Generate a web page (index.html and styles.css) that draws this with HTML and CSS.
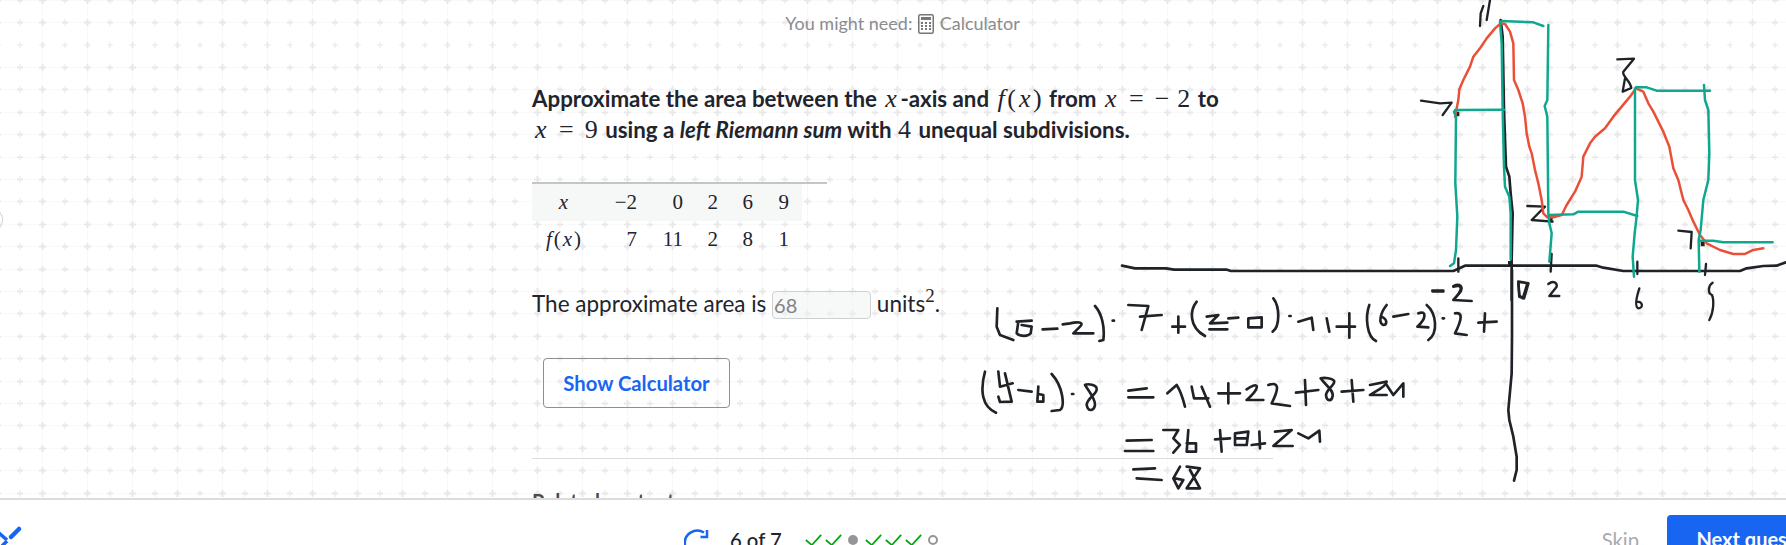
FILE: index.html
```html
<!DOCTYPE html>
<html lang="en">
<head>
<meta charset="utf-8">
<title>Left Riemann sum</title>
<link rel="stylesheet" href="styles.css">
</head>
<body>
<div class="page">
  <main class="main">
    <span class="edge-circle"></span>
    <div class="column">
      <p class="hint">You might need:
        <svg class="calc" viewBox="0 0 16 20" width="16" height="20">
          <rect x="0.75" y="0.75" width="14.5" height="18.5" rx="1.5" fill="none" stroke="#777" stroke-width="1.5"/>
          <rect x="3" y="3" width="10" height="3" fill="#777"/>
          <path d="M3 8h2v2H3zM7 8h2v2H7zM11 8h2v2h-2zM3 11h2v2H3zM7 11h2v2H7zM11 11h2v2h-2zM3 14h2v2H3zM7 14h2v2H7zM11 14h2v2h-2z" fill="#777"/>
        </svg>
        Calculator</p>
      <p class="question">Approximate the area between the <span class="m"><i>x</i></span>-axis and <span class="m"><i>f</i>(<i>x</i>)</span> from <span class="m"><i>x</i><b class="rel">=</b><span class="neg">−</span>2</span> to<br>
      <span class="m"><i>x</i><b class="rel">=</b>9</span> using a <em>left Riemann sum</em> with <span class="m">4</span> unequal subdivisions.</p>
      <div class="table-rule">
        <table class="values">
          <colgroup><col class="c1"><col class="c2"><col class="c3"><col class="c4"><col class="c4"><col class="c5"></colgroup>
          <tr class="head"><th><i>x</i></th><td>−2</td><td>0</td><td>2</td><td>6</td><td>9</td></tr>
          <tr><th><i>f</i>(<i>x</i>)</th><td>7</td><td>11</td><td>2</td><td>8</td><td>1</td></tr>
        </table>
      </div>
      <p class="answer">The approximate area is <input class="box" value="68" aria-label="answer"> units<sup class="m">2</sup>.</p>
      <button class="calc-btn" type="button">Show Calculator</button>
      <hr class="rule">
      <h2 class="related">Related content</h2>
    </div>
  </main>
  <footer class="footer">
    <div class="tool">
      <svg width="24" height="24" viewBox="0 0 24 24"><path d="M-1 9 L7 16 M7 17 L2 22" stroke="#1865f2" stroke-width="3.5" fill="none"/><path d="M11 13 L19 5" stroke="#1865f2" stroke-width="4.5" stroke-linecap="round" fill="none"/></svg>
    </div>
    <svg class="retry" width="26" height="26" viewBox="0 0 26 26"><path d="M1 18 A12.5 12.5 0 0 1 20 5.5" fill="none" stroke="#1865f2" stroke-width="2.5"/><path d="M23 3 V10 H16.5" fill="none" stroke="#1865f2" stroke-width="2.5"/></svg>
    <span class="count">6 of 7</span>
    <div class="dots">
      <svg class="tick" viewBox="0 0 20 14"><path d="M1 7 L8 13 L19 1"/></svg>
      <svg class="tick" viewBox="0 0 20 14"><path d="M1 7 L8 13 L19 1"/></svg>
      <span class="dot"></span>
      <svg class="tick" viewBox="0 0 20 14"><path d="M1 7 L8 13 L19 1"/></svg>
      <svg class="tick" viewBox="0 0 20 14"><path d="M1 7 L8 13 L19 1"/></svg>
      <svg class="tick" viewBox="0 0 20 14"><path d="M1 7 L8 13 L19 1"/></svg>
      <span class="ring"></span>
    </div>
    <div class="actions">
      <span class="skip">Skip</span>
      <button class="next" type="button">Next question</button>
    </div>
  </footer>
  <svg class="ink" width="1786" height="545" viewBox="0 0 1786 545">
    <g transform="translate(1430 0) scale(.33333)">
      <g class="pen">
        <path d="M-924,797 L-885,805 -792,805 -768,809 -609,809 -597,813 0,813 70,813 105,797 500,797 520,803 580,813 930,813 950,805 1000,798 1040,797 1068,787"/>
        <path d="M212,60 L218,110 222,330 228,500 238,530 242,580 248,640 245,780 245,900"/>
        <path class="thin" d="M150,78 L152,40 160,18 M170,60 L180,0"/>
        <path class="thin" d="M-27,302 L30,310 65,308 38,345"/>
        <path class="thin" d="M562,178 L612,176 580,215 C575,228 600,240 604,264 L578,275 585,235"/>
        <path class="thin" d="M292,618 L345,620 305,660 368,665"/>
        <path class="thin" d="M745,692 L785,696 782,745"/>
        <path class="thin" d="M85,775 L85,815 M365,762 L362,815 M622,785 L622,822 M828,792 L825,825"/>
        <path class="thin" d="M8,875 L40,875 M70,858 C90,848 100,860 92,875 L72,898 M265,850 L268,885 278,895 292,850 M355,852 C370,840 382,848 380,860 L358,888 388,888"/>
        <path class="thin" d="M628,865 C620,890 612,920 625,925 C640,925 640,905 620,905"/>
        <path class="thin" d="M848,848 C835,855 832,880 846,885 C852,900 852,935 838,960"/>
        <path class="thick" d="M76,342 h12 M234,790 h12 M356,660 h12 M812,732 h12"/>
      </g>
      <path class="red" d="M75,350 L85,300 88,268 100,240 120,200 130,170 150,145 170,115 195,85 212,70 225,72 240,95 250,130 252,240 265,270 278,310 285,350 290,400 298,440 305,460 315,510 325,550 335,600 340,640 352,652 370,652 395,645 410,615 435,575 455,530 460,470 480,430 495,410 525,385 550,350 575,320 600,290 618,265 640,275 655,310 670,335 700,395 718,440 730,505 745,540 760,600 775,630 790,665 810,705 830,730 870,750 910,762 945,762 970,750 1000,745"/>
      <path class="green" d="M60,798 L72,790 78,750 82,650 76,550 78,350 72,335 M75,330 L222,329 M210,65 L215,130 218,330 222,500 225,560 238,590 242,640 242,778 M215,63 L310,67 340,78 M355,75 L352,300 344,318 352,350 355,640 358,670 365,700 358,785 M355,645 L430,643 445,635 580,635 622,648 M618,262 L650,262 680,272 840,272 M615,265 L615,540 624,600 620,648 614,700 608,770 612,830 M822,255 L825,300 835,330 838,460 835,540 820,600 812,690 806,720 808,815 M810,722 L850,722 880,727 1028,727"/>
    </g>
    <g class="pen" transform="translate(970 290) scale(.33333)">
      <path d="M82,55 L80,110 90,135 130,150 M140,95 L185,92 M145,95 L140,130 C150,140 175,140 182,130 L185,110 155,105 M218,118 L262,116 M278,103 L300,100 C320,95 345,95 330,110 L310,130 370,130 M375,48 C395,70 405,110 400,150 L388,153"/>
      <path d="M428,92 h4 M475,45 L535,48 515,120 M510,80 L575,75 M607,110 L645,110 M625,80 L625,128 M680,35 C660,60 655,110 705,138 M710,80 L745,75 720,100 772,98 M718,118 L772,118 M775,85 L805,83 M835,85 L875,82 875,112 835,112 Z"/>
      <path d="M45,245 C30,300 35,350 78,368 M85,245 L90,290 128,280 M105,250 L125,335 L90,336 85,320 M145,300 L185,305 M205,290 L202,335 220,335 220,315 205,312 M245,252 C280,290 285,350 270,360 L245,363 M306,312 h4"/>
      <path d="M345,285 C355,300 378,330 375,345 C372,362 355,368 350,345 C350,325 385,310 380,295 C378,285 355,280 345,285 M475,302 L530,295 M475,322 L550,322 M592,310 L620,285 C630,300 640,330 645,350 M665,290 L672,325 715,325 M695,290 L720,350 M745,310 L810,310 M775,280 L775,340"/>
      <path d="M470,452 L545,450 M465,483 L550,483 M580,420 L625,420 610,445 630,465 610,488 M655,420 L650,485 678,485 678,460 650,460 M735,448 L780,445 M750,420 L755,485 M795,430 L835,425 830,465 795,465 Z M795,445 L832,445 M845,465 L885,460 M868,425 L870,475"/>
      <path d="M490,538 L555,535 M500,565 L575,570 M630,530 L610,565 625,595 640,570 615,565 M650,530 L690,535 650,595 690,595 660,540"/>
    </g>
    <g class="pen" transform="translate(1230 270) scale(.33333)">
      <path d="M846,0 L846,200 845,310 835,420 838,450 850,500 860,560 860,600 852,632"/>
      <path d="M865,35 L868,80 882,85 895,40 865,35"/>
      <path d="M130,85 C150,110 150,170 128,185 M178,138 h4 M205,155 L245,143 250,180 M290,145 L298,185 M320,170 L375,170 M358,130 L358,203 M418,105 C405,140 410,200 438,213 M470,105 C450,130 445,160 460,165 C470,165 475,150 455,140 M490,140 L535,132 M565,130 C590,120 590,145 562,170 L595,172 M590,105 C620,130 625,190 595,210 M638,145 h4 M675,130 C700,125 695,150 675,190 L710,195 M745,158 L800,155 M765,130 L762,185"/>
      <path d="M607,62 L640,62 M670,50 C700,40 700,60 670,90 L725,93"/>
      <path d="M50,358 C80,335 100,345 50,390 L100,390 M115,345 C145,335 150,350 125,400 L180,408 M198,368 L265,360 M225,330 L228,405 M272,325 C285,345 312,360 308,378 C305,395 290,395 288,375 C290,355 318,345 312,332 C305,325 285,322 272,325 M335,365 L400,360 M365,330 L370,395 M420,345 L470,335 C470,350 425,370 420,375 L470,375 M470,345 L490,375 520,340 520,380"/>
      <path d="M135,485 L185,480 130,528 188,528 M205,490 L235,505 268,482 270,515"/>
    </g>
  </svg>
</div>
</body>
</html>
```
FILE: styles.css
```css
* { box-sizing: border-box; }
html, body { margin: 0; padding: 0; height: 545px; overflow: hidden; background: #fff; }
body { font-family: Lato, "Open Sans", sans-serif; color: #21242c; }
.page { position: relative; width: 1786px; height: 545px; overflow: hidden; display: flex; flex-direction: column; }

.main {
  flex: 0 0 498px;
  position: relative;
  overflow: hidden;
  padding-left: 532px;
  background-color: #fff;
  background-image: url("data:image/svg+xml,%3Csvg xmlns='http://www.w3.org/2000/svg' width='45' height='45' viewBox='0 0 45 45'%3E%3Cpath d='M0 22.5H45M22.5 0V45' stroke='%23f3f3f3' stroke-width='2' stroke-dasharray='2 2'/%3E%3Cpath d='M15.5 22.5H29.5M22.5 15.5V29.5' stroke='%23e8e8e8' stroke-width='4'/%3E%3C/svg%3E");
  background-size: 22.5px 22.42px;
  background-position: 8.75px 11.4px;
}
.edge-circle { position: absolute; left: -24px; top: 207px; width: 27px; height: 26px; border: 1px solid #d4d4d4; border-radius: 50%; }
.column { width: 741px; }

.hint { margin: 0; padding-top: 11px; height: 35px; text-align: center; font-size: 18px; line-height: 24px; color: #8a8c90; }
.calc { vertical-align: -4px; margin: 0 1px; }

.m, .m i { font-family: "Liberation Serif", serif; font-weight: 400; }
.m { font-size: 26px; letter-spacing: 1px; margin: 0 1px; }
.m i { letter-spacing: 2.5px; padding-left: 2px; }
.rel { font-weight: 400; margin: 0 10px; }
.neg { margin-right: 7px; }

.question { margin: 48px 0 0; font-size: 22.3px; font-weight: 700; line-height: 31px; }
.question em { font-style: italic; }

.table-rule { width: 295px; margin-top: 37px; border-top: 2px solid #c4c5c7; }
.values { border-collapse: collapse; table-layout: fixed; width: 270px; font-family: "Liberation Serif", serif; font-size: 21px; }
.c1 { width: 65px; } .c2 { width: 53px; } .c3 { width: 46px; } .c4 { width: 35px; } .c5 { width: 36px; }
.values th { font-weight: 400; text-align: center; padding: 0; height: 37px; letter-spacing: 2px; }
.values td { text-align: right; padding: 0 13px 0 0; height: 37px; }
.head { background: #f6f7f7; }

.answer { margin: 31px 0 0; font-size: 22.5px; line-height: 30px; }
.answer sup { font-size: 19px; line-height: 0; letter-spacing: 0; margin: 0; vertical-align: 10px; }
.box { width: 99px; height: 28px; vertical-align: -1px; padding: 0 1px; border: 1px solid #cfd0d2; border-radius: 4px; background: rgba(240,241,242,.5); font: 20px Lato, sans-serif; color: #808285; }

.calc-btn { display: block; margin: 39px 0 0 11px; width: 187px; height: 50px; border: 1px solid #8e8f93; border-radius: 4px; background: transparent; color: #1865f2; font: 700 20.25px Lato, sans-serif; }
.rule { margin: 50px 0 0; border: 0; border-top: 1px solid #dcdcdd; }
.related { margin: 30px 0 0; font-size: 20.25px; font-weight: 700; color: #4a4c52; line-height: 24px; }

.footer { flex: 1; position: relative; display: flex; align-items: flex-start; background: #fff; border-top: 2px solid #dcdcdd; overflow: hidden; }
.tool { width: 684px; flex: none; padding-top: 24px; }
.tool svg { display: block; overflow: visible; }
.retry { flex: none; margin-top: 27px; }
.count { flex: none; margin: 26px 0 0 20px; font-size: 20.25px; font-weight: 500; line-height: 28px; }
.dots { flex: none; display: flex; align-items: center; gap: 3px; margin: 34px 0 0 23px; }
.tick { width: 17px; height: 12px; fill: none; stroke: #00a60e; stroke-width: 2; }
.dot { width: 10px; height: 10px; margin: 0 4px 0 3px; border-radius: 50%; background: #95969a; }
.ring { width: 10px; height: 10px; margin-left: 3px; border-radius: 50%; border: 2px solid #95969a; }
.actions { margin-left: auto; margin-right: -66px; display: flex; align-items: flex-start; flex: none; padding-top: 15px; }
.skip { margin: 12px 28px 0 0; font-size: 20.25px; font-weight: 400; color: #a9aaad; line-height: 26px; }
.next { width: 185px; height: 48px; border: 0; border-radius: 4px; background: #1865f2; color: #fff; font: 700 20px Lato, sans-serif; }

.ink { position: absolute; left: 0; top: 0; pointer-events: none; }
.ink path { fill: none; stroke-linecap: round; stroke-linejoin: round; }
.pen path { stroke: #1f2328; stroke-width: 8; }
.pen path.thin { stroke-width: 7; }
.pen path.thick { stroke-width: 14; stroke-linecap: butt; }
.ink path.red { stroke: #ea5038; stroke-width: 7.5; }
.ink path.green { stroke: #0fa88f; stroke-width: 7.5; }
```
